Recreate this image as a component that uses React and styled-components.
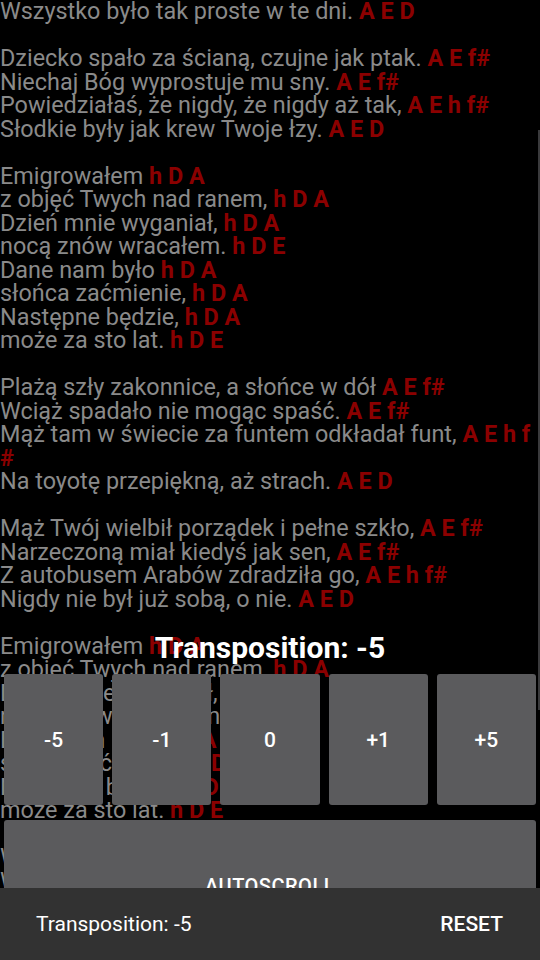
import React from "react";
import styled, { createGlobalStyle } from "styled-components";

const GlobalStyle = createGlobalStyle`
  html, body {
    margin: 0;
    padding: 0;
    background: #000;
    overflow: hidden;
  }
  body {
    font-family: Roboto, "Noto Sans", sans-serif;
  }
`;

// [lyric, chords] - null is an empty line between verses
const song = [
  ["Wszystko było tak proste w te dni.", "A E D"],
  null,
  ["Dziecko spało za ścianą, czujne jak ptak.", "A E f#"],
  ["Niechaj Bóg wyprostuje mu sny.", "A E f#"],
  ["Powiedziałaś, że nigdy, że nigdy aż tak,", "A E h f#"],
  ["Słodkie były jak krew Twoje łzy.", "A E D"],
  null,
  ["Emigrowałem", "h D A"],
  ["z objęć Twych nad ranem,", "h D A"],
  ["Dzień mnie wyganiał,", "h D A"],
  ["nocą znów wracałem.", "h D E"],
  ["Dane nam było", "h D A"],
  ["słońca zaćmienie,", "h D A"],
  ["Następne będzie,", "h D A"],
  ["może za sto lat.", "h D E"],
  null,
  ["Plażą szły zakonnice, a słońce w dół", "A E f#"],
  ["Wciąż spadało nie mogąc spaść.", "A E f#"],
  ["Mąż tam w świecie za funtem odkładał funt,", "A E h f#"],
  ["Na toyotę przepiękną, aż strach.", "A E D"],
  null,
  ["Mąż Twój wielbił porządek i pełne szkło,", "A E f#"],
  ["Narzeczoną miał kiedyś jak sen,", "A E f#"],
  ["Z autobusem Arabów zdradziła go,", "A E h f#"],
  ["Nigdy nie był już sobą, o nie.", "A E D"],
  null,
  ["Emigrowałem", "h D A"],
  ["z objęć Twych nad ranem,", "h D A"],
  ["Dzień mnie wyganiał,", "h D A"],
  ["nocą znów wracałem.", "h D E"],
  ["Dane nam było", "h D A"],
  ["słońca zaćmienie,", "h D A"],
  ["Następne będzie,", "h D A"],
  ["może za sto lat.", "h D E"],
  null,
  ["Wszystko było tak proste w te dni.", "A E D"],
  ["Wciąż spadało nie mogąc spaść.", "A E f#"],
];

const steps = ["-5", "-1", "0", "+1", "+5"];

const Screen = styled.div`
  position: relative;
  width: 540px;
  height: 960px;
  overflow: hidden;
  background: #000;
`;

const Lyrics = styled.div`
  padding-right: 4px;
  font-size: 23.4px;
  line-height: 23.5px;
  color: #8a8a8a;
`;

const Line = styled.div`
  min-height: 23.5px;
`;

const Chords = styled.span`
  color: #8b0000;
  font-weight: 700;
  word-break: break-all;
`;

const ScrollThumb = styled.div`
  position: absolute;
  right: 0;
  top: 130px;
  width: 2px;
  height: 580px;
  background: #3a3a3c;
`;

const Panel = styled.div`
  position: absolute;
  left: 0;
  right: 0;
  top: 630px;
  display: flex;
  flex-direction: column;
  align-items: stretch;
`;

const Title = styled.div`
  text-align: center;
  color: #fff;
  font-size: 30px;
  font-weight: 700;
  line-height: 35px;
  margin-bottom: 9px;
`;

const StepRow = styled.div`
  display: grid;
  grid-template-columns: repeat(5, 1fr);
  gap: 9px;
  padding: 0 4px;
`;

const PanelButton = styled.button`
  height: 131px;
  border: none;
  border-radius: 3px;
  background: #5b5b5d;
  color: #fff;
  font-family: Roboto, sans-serif;
  font-size: 21px;
  font-weight: 500;
  padding: 0;
`;

const WideButton = styled(PanelButton)`
  margin: 15px 4px 0;
  font-size: 20px;
  letter-spacing: 0.5px;
`;

const Snackbar = styled.div`
  position: absolute;
  left: 0;
  right: 0;
  bottom: 0;
  height: 72px;
  background: #323232;
  display: flex;
  align-items: center;
  justify-content: space-between;
  padding: 0 37px 0 36px;
  box-sizing: border-box;
  color: #fff;
  font-size: 21px;
`;

const SnackAction = styled.span`
  font-weight: 500;
`;

export default function App() {
  return (
    <Screen>
      <GlobalStyle />
      <Lyrics>
        {song.map((l, i) =>
          l ? (
            <Line key={i}>
              {l[0]} <Chords>{l[1]}</Chords>
            </Line>
          ) : (
            <Line key={i} />
          )
        )}
      </Lyrics>
      <ScrollThumb />
      <Panel>
        <Title>Transposition: -5</Title>
        <StepRow>
          {steps.map((s) => (
            <PanelButton key={s}>{s}</PanelButton>
          ))}
        </StepRow>
        <WideButton>AUTOSCROLL</WideButton>
      </Panel>
      <Snackbar>
        <span>Transposition: -5</span>
        <SnackAction>RESET</SnackAction>
      </Snackbar>
    </Screen>
  );
}
